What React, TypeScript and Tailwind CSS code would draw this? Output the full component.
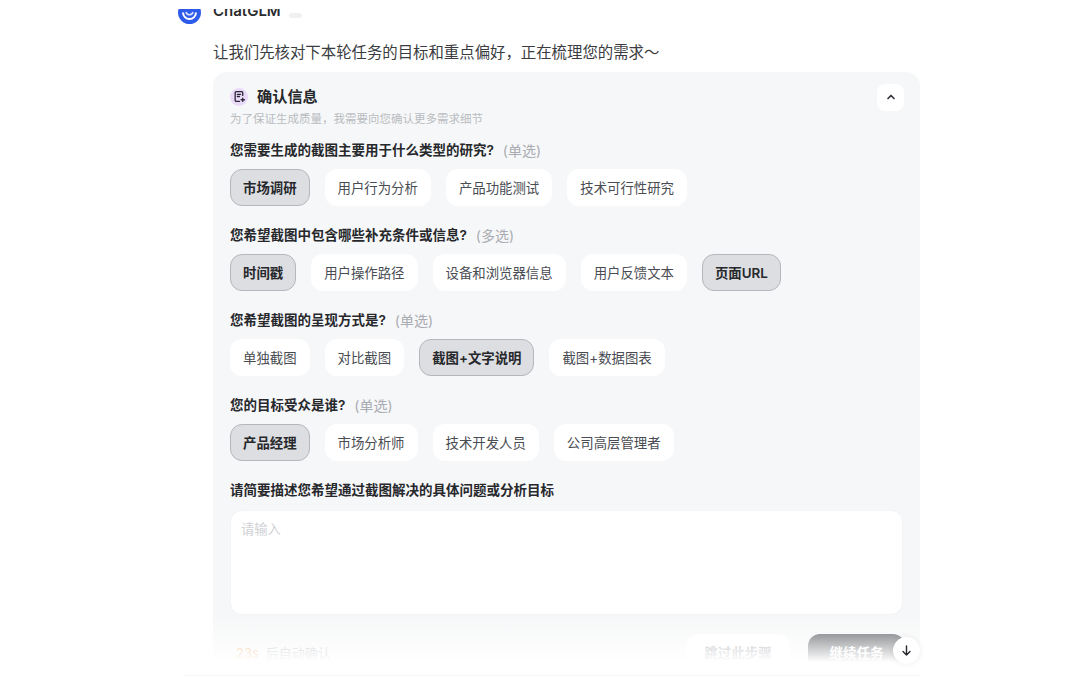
import React from "react";

type Q = { title: string; kind?: string; opts: [string, boolean][] };
const questions: Q[] = [
  { title: "您需要生成的截图主要用于什么类型的研究?", kind: "(单选)", opts: [["市场调研", true], ["用户行为分析", false], ["产品功能测试", false], ["技术可行性研究", false]] },
  { title: "您希望截图中包含哪些补充条件或信息?", kind: "(多选)", opts: [["时间戳", true], ["用户操作路径", false], ["设备和浏览器信息", false], ["用户反馈文本", false], ["页面URL", true]] },
  { title: "您希望截图的呈现方式是?", kind: "(单选)", opts: [["单独截图", false], ["对比截图", false], ["截图+文字说明", true], ["截图+数据图表", false]] },
  { title: "您的目标受众是谁?", kind: "(单选)", opts: [["产品经理", true], ["市场分析师", false], ["技术开发人员", false], ["公司高层管理者", false]] },
];

function Chip({ label, on }: { label: string; on: boolean }) {
  return on ? (
    <div className="h-[37px] px-3 pt-px flex items-center rounded-[12px] border border-[#b4b7bc] bg-[#dcdee1] text-[13.4px] font-semibold text-[#26282c] whitespace-nowrap">{label}</div>
  ) : (
    <div className="h-[37px] px-[13px] pt-px flex items-center rounded-[12px] bg-white text-[13.4px] text-[#494c52] whitespace-nowrap">{label}</div>
  );
}

export default function App() {
  return (
    <div className="relative w-[1080px] h-[676px] overflow-hidden bg-white font-['Inter','Noto_Sans_CJK_SC',sans-serif]">
      <div className="ml-[178px] w-[742px]">
        <div className="flex items-center h-[23px] mt-px">
          <svg width="23" height="23" viewBox="0 0 23 23" className="shrink-0">
            <circle cx="11.5" cy="11.5" r="11.5" fill="#2f5bea" />
            <path d="M5 11.5a6.5 6.5 0 0 0 13 0" fill="none" stroke="#fff" strokeWidth="2" />
            <path d="M8 11a3.6 3.6 0 0 0 7 0" fill="none" stroke="#cfdcff" strokeWidth="1.6" />
          </svg>
          <span className="ml-3 text-[15px] font-semibold text-[#2b2d31] -mt-[2px]">ChatGLM</span>
          <span className="ml-[8px] w-[13px] h-[5px] mt-[6px] rounded-sm bg-[#eef0f2]" />
        </div>
        <div className="ml-[35px] mt-[18px] h-[22px] flex items-center text-[15.4px] text-[#3a3c41] whitespace-nowrap">
          让我们先核对下本轮任务的目标和重点偏好，正在梳理您的需求～
        </div>
        <div className="ml-[35px] mt-[8px] w-[707px] h-[640px] rounded-t-[14px] bg-[#f6f7f8] px-[17px] pt-3">
          <div className="flex justify-between h-[26px] items-center">
            <div className="flex items-center gap-[9px]">
              <div className="w-[18px] h-[18px] rounded-full bg-[#e9daf9] flex items-center justify-center">
                <svg width="13" height="13" viewBox="0 0 12 12" fill="none" stroke="#2a2636" strokeWidth="1.2" strokeLinecap="round">
                  <path d="M6 10.5H3a1 1 0 0 1-1-1v-7a1 1 0 0 1 1-1h5a1 1 0 0 1 1 1V5" />
                  <path d="M4 4h3M4 6h2" />
                  <path d="M9 7.5v3M7.5 9h3" />
                </svg>
              </div>
              <span className="text-[15.2px] font-semibold text-[#26282c]">确认信息</span>
            </div>
            <div className="w-[27px] h-[27px] mr-[-1px] rounded-[8px] bg-white flex items-center justify-center">
              <svg width="12" height="12" viewBox="0 0 12 12" fill="none" stroke="#33353a" strokeWidth="1.7" strokeLinecap="round" strokeLinejoin="round">
                <path d="M3 7.5 6 4.5l3 3" />
              </svg>
            </div>
          </div>
          <div className="mt-[2px] h-[16px] flex items-center text-[11.5px] text-[#b9bcc1]">为了保证生成质量，我需要向您确认更多需求细节</div>
          {questions.map((q, i) => (
            <div key={i} className={i === 0 ? "mt-[12px]" : "mt-[19px]"}>
              <div className="h-[20px] flex items-center gap-[9px] mb-[9px]">
                <span className="text-[13.5px] font-semibold text-[#26282c]">{q.title}</span>
                <span className="text-[14px] text-[#a9acb2]">{q.kind}</span>
              </div>
              <div className="flex gap-[15px]">
                {q.opts.map(([label, on]) => (
                  <Chip key={label} label={label} on={on} />
                ))}
              </div>
            </div>
          ))}
          <div className="mt-[19px] h-[20px] flex items-center text-[13.5px] font-semibold text-[#26282c]">请简要描述您希望通过截图解决的具体问题或分析目标</div>
          <div className="mt-[10px] w-[673px] h-[105px] rounded-[12px] bg-white border border-[#f3f4f5] px-[10px] py-[9px] text-[13.3px] text-[#cfd1d5]">请输入</div>
          <div className="mt-[19px] flex items-start justify-between">
            <div className="flex items-center gap-[7px] ml-[6px] mt-[10px] text-[13px]">
              <span className="text-[#f0a050]">23s</span>
              <span className="text-[#a9acb2]">后自动确认</span>
            </div>
            <div className="flex gap-[18px] mr-[-2px]">
              <div className="w-[104px] h-[38px] rounded-[12px] bg-white flex items-center justify-center text-[13.5px] font-semibold text-[#9a9da3]">跳过此步骤</div>
              <div className="w-[97px] h-[38px] rounded-[12px] bg-[#54575c] flex items-center justify-center text-[13.5px] font-semibold text-white">继续任务</div>
            </div>
          </div>
        </div>
      </div>
      <div className="absolute left-0 top-0 w-full h-[9px] bg-white" />
      <div className="absolute left-0 top-[616px] w-full h-[46px] bg-gradient-to-b from-white/0 to-white" />
      <div className="absolute left-0 top-[662px] bottom-0 w-full bg-white" />
      <div className="absolute left-[184px] bottom-0 w-[736px] h-px bg-[#f4f5f6]" />
      <div className="absolute left-[893px] top-[637px] w-[27px] h-[27px] rounded-full bg-white shadow-[0_0_6px_rgba(0,0,0,0.08)] flex items-center justify-center">
        <svg width="13" height="13" viewBox="0 0 13 13" fill="none" stroke="#26282c" strokeWidth="1.4" strokeLinecap="round" strokeLinejoin="round">
          <path d="M6.5 2v9M3 7.5l3.5 3.5L10 7.5" />
        </svg>
      </div>
    </div>
  );
}
